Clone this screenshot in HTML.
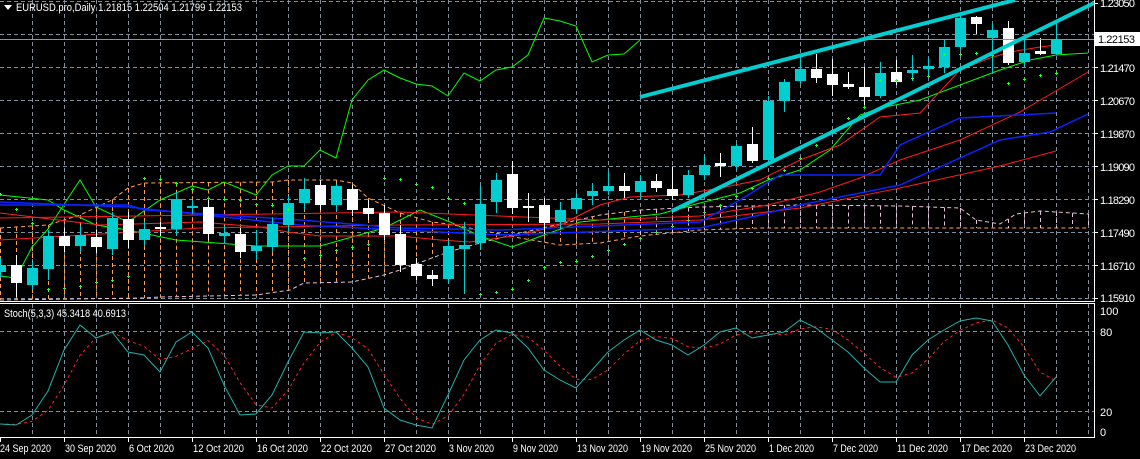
<!DOCTYPE html>
<html><head><meta charset="utf-8"><style>
html,body{margin:0;padding:0;background:#000;width:1140px;height:459px;overflow:hidden}
svg{position:absolute;left:0;top:0}
.t{font-family:"Liberation Sans",sans-serif;font-size:11px;fill:#fff}
</style></head><body>
<svg id="s" width="1140" height="459" xmlns="http://www.w3.org/2000/svg">
<g id="grid" stroke="#7f8d9c" stroke-width="1" stroke-dasharray="4,3"></g>
<g id="cloud"></g>
<g id="lines" fill="none"></g>
<g id="candles"></g>
<g id="sar" stroke="#22ff22" stroke-width="1"></g>
<line x1="640" y1="97" x2="1015" y2="0" stroke="#00ced1" stroke-width="4"/>
<line x1="672" y1="211" x2="1094" y2="3" stroke="#00ced1" stroke-width="4"/>
<line x1="0" y1="39.5" x2="1094" y2="39.5" stroke="#8a96a3" stroke-width="1"/>
<g id="stoch" fill="none"></g>
<line x1="1094.5" y1="0" x2="1094.5" y2="302" stroke="#fff"/>
<line x1="0" y1="301.5" x2="1095" y2="301.5" stroke="#fff"/>
<line x1="0" y1="303.5" x2="1095" y2="303.5" stroke="#fff"/>
<line x1="1094.5" y1="304" x2="1094.5" y2="438" stroke="#fff"/>
<line x1="0" y1="437.5" x2="1095" y2="437.5" stroke="#fff"/>
<g id="ticks" stroke="#fff"></g>
<rect x="1095" y="32" width="45" height="14" fill="#fff"/>
<text x="1098" y="43" class="t" style="fill:#000" textLength="37">1.22153</text>
<text x="1100" y="7" class="t" textLength="35">1.23050</text>
<text x="1100" y="72" class="t" textLength="35">1.21470</text>
<text x="1100" y="105" class="t" textLength="35">1.20670</text>
<text x="1100" y="138" class="t" textLength="35">1.19870</text>
<text x="1100" y="171" class="t" textLength="35">1.19090</text>
<text x="1100" y="204" class="t" textLength="35">1.18290</text>
<text x="1100" y="237" class="t" textLength="35">1.17490</text>
<text x="1100" y="270" class="t" textLength="35">1.16710</text>
<text x="1100" y="302" class="t" textLength="35">1.15910</text>
<text x="1100" y="315" class="t">100</text>
<text x="1100" y="336" class="t">80</text>
<text x="1100" y="416" class="t">20</text>
<text x="1100" y="436" class="t">0</text>
<path d="M4 5 L12 5 L8 10 Z" fill="#fff"/>
<text x="16" y="11" class="t" textLength="226" lengthAdjust="spacingAndGlyphs">EURUSD.pro,Daily  1.21815 1.22504 1.21799 1.22153</text>
<text x="4" y="317" class="t" textLength="122" lengthAdjust="spacingAndGlyphs">Stoch(5,3,3) 45.3418 40.6913</text>
<g id="dates" class="t"></g>
</svg>
<script>
var NS="http://www.w3.org/2000/svg";
function el(p,n,a,txt){var e=document.createElementNS(NS,n);for(var k in a)e.setAttribute(k,a[k]);if(txt)e.textContent=txt;document.getElementById(p).appendChild(e);return e;}
for(var x=32;x<=1088;x+=32){el('grid','line',{x1:x+.5,y1:0,x2:x+.5,y2:301});el('grid','line',{x1:x+.5,y1:304,x2:x+.5,y2:437});}
[1,34,67,100,133,166,199,232,265,298].forEach(function(y){el('grid','line',{x1:0,y1:y+.5,x2:1094,y2:y+.5});});
[331,411].forEach(function(y){el('grid','line',{x1:0,y1:y+.5,x2:1094,y2:y+.5});});
var d=["24 Sep 2020","30 Sep 2020","6 Oct 2020","12 Oct 2020","16 Oct 2020","22 Oct 2020","27 Oct 2020","3 Nov 2020","9 Nov 2020","13 Nov 2020","19 Nov 2020","25 Nov 2020","1 Dec 2020","7 Dec 2020","11 Dec 2020","17 Dec 2020","23 Dec 2020"];
d.forEach(function(s,i){var w=s.length==11?51:45;el('dates','text',{x:i*64+(i?1:0),y:452,textLength:w,lengthAdjust:'spacingAndGlyphs'},s);el('ticks','line',{x1:i*64+.5,y1:438,x2:i*64+.5,y2:442});});
[3,67,100,133,166,199,232,265,298].forEach(function(y){el('ticks','line',{x1:1094,y1:y+.5,x2:1098,y2:y+.5});});
function pl(g,pts,st,w,da){var s=pts.map(function(p){return p.join(',')}).join(' ');var a={points:s,stroke:st,'stroke-width':w||1,fill:'none'};if(da)a['stroke-dasharray']=da;el(g,'polyline',a);}
var up=[[0,228],[48,225],[80,215],[112,200],[128,188],[144,183],[272,182],[288,180],[336,180],[352,183],[368,198],[400,213],[432,222],[448,224],[480,230],[520,238],[560,245],[600,243],[640,236],[700,230],[760,228],[820,228],[900,228],[960,228],[1088,228]];
var lo=[[0,300],[144,298],[160,297],[256,295],[290,290],[304,283],[352,282],[384,275],[400,270],[448,252],[480,243],[512,235],[560,224],[600,215],[640,210],[700,207],[800,205],[900,206],[960,208],[976,220],[1000,224],[1016,214],[1040,211],[1088,214]];
pl('cloud',up,'#ff9f50',1,'4,3');pl('cloud',lo,'#e8c0d8',1,'4,3');
function interp(a,x){for(var i=1;i<a.length;i++)if(x<=a[i][0]){var t=(x-a[i-1][0])/(a[i][0]-a[i-1][0]);return a[i-1][1]+t*(a[i][1]-a[i-1][1]);}return a[a.length-1][1];}
for(var x=0;x<=1088;x+=16){var y1=interp(up,x),y2=interp(lo,x);el('cloud','line',{x1:x+.5,y1:Math.min(y1,y2),x2:x+.5,y2:Math.max(y1,y2),stroke:x<640?'#ff9f50':'#e8c0d8','stroke-dasharray':'4,3'});}
pl('lines',[[0,276],[16,278],[32,247],[48,229],[80,180],[96,207],[128,222],[160,200],[192,186],[208,190],[224,182],[256,195],[272,175],[288,166],[304,166],[320,150],[336,158],[352,100],[368,80],[384,70],[400,78],[416,84],[432,86],[448,96],[464,73],[480,81],[496,70],[512,67],[528,55],[544,18],[560,21],[576,26],[592,62],[608,55],[624,54],[640,40]],'#00ff00');
pl('lines',[[0,195],[48,200],[64,210],[96,225],[128,230],[176,240],[256,246],[320,246],[384,228],[420,210],[450,222],[480,236],[512,247],[544,235],[580,222],[620,218],[660,214],[700,203],[740,193],[768,180],[800,170],[830,150],[860,115],[880,108],[920,100],[960,85],[1000,70],[1030,60],[1056,55],[1088,53]],'#00ff00');
pl('lines',[[0,213],[100,225],[200,222],[260,227],[288,232],[320,236],[400,236],[440,240],[470,242],[520,235],[560,225],[600,205],[630,197],[680,195],[720,188],[760,180],[800,160],[840,145],[880,117],[920,113],[960,70],[990,58],[1010,52],[1040,47],[1056,45]],'#ff2020');
pl('lines',[[0,218],[200,215],[400,212],[600,220],[700,216],[768,205],[820,192],[860,178],[900,160],[960,140],[1020,112],[1088,72]],'#ff1a1a');
pl('lines',[[0,240],[200,228],[400,225],[600,224],[700,220],[800,208],[900,188],[1000,166],[1056,151]],'#ff1a1a');
pl('lines',[[0,205],[128,205],[145,210],[300,220],[400,228],[500,230],[700,222],[740,200],[780,175],[880,175],[900,145],[960,118],[1056,113]],'#0a24ff',1.5);
pl('lines',[[0,202],[128,207],[300,225],[500,235],[700,228],[760,215],[800,205],[900,185],[1000,140],[1050,132],[1088,114]],'#0a24ff',1.5);
var C=[[0,265,272,258,278,1],[16,265,283,255,297,0],[32,268,285,262,290,1],[48,236,269,230,280,1],[64,236,246,228,252,0],[80,235,246,226,252,1],[96,237,247,230,253,0],[112,218,249,212,255,1],[128,219,240,212,248,0],[144,229,240,222,246,1],[160,227,229,222,236,0],[176,199,229,192,236,1],[192,206,208,200,214,1],[208,207,234,200,240,0],[224,233,236,226,243,1],[240,234,252,228,258,0],[256,246,251,230,260,1],[272,224,247,218,252,1],[288,203,225,196,232,1],[304,189,203,178,210,1],[320,185,205,180,210,0],[336,186,205,184,212,1],[352,189,210,185,216,0],[368,208,214,200,220,0],[384,213,235,205,240,0],[400,234,265,225,272,0],[416,264,276,258,280,0],[432,275,279,270,286,0],[448,246,279,240,283,1],[464,245,249,222,294,1],[480,204,243,185,250,1],[496,180,202,173,213,1],[512,174,208,161,214,0],[528,206,208,193,222,0],[544,205,223,198,234,0],[560,210,222,202,230,1],[576,198,209,193,214,1],[592,191,196,183,205,1],[608,186,191,172,195,1],[624,186,191,173,198,0],[640,181,192,176,200,1],[656,181,188,174,192,0],[672,189,196,167,200,0],[688,175,195,170,198,1],[704,165,175,155,180,1],[720,163,166,153,177,0],[736,146,166,144,170,1],[752,144,161,127,163,0],[768,101,160,96,162,1],[784,82,101,79,112,1],[800,69,81,57,84,1],[816,69,78,54,83,0],[832,74,85,59,96,0],[848,84,87,72,89,0],[864,87,97,67,105,0],[880,73,96,62,98,1],[896,72,82,60,85,0],[912,70,73,55,81,1],[928,66,69,58,78,1],[944,47,67,40,73,1],[960,18,47,12,49,1],[976,17,24,16,34,0],[992,30,38,23,74,1],[1008,28,63,21,65,0],[1024,53,62,39,66,1],[1040,51,54,38,55,0],[1056,39,54,23,55,1]];
C.forEach(function(c){var col=c[5]?'#00ced1':'#ffffff';el('candles','line',{x1:c[0]+.5,y1:c[3],x2:c[0]+.5,y2:c[4],stroke:col});el('candles','rect',{x:c[0]-5,y:c[1],width:11,height:Math.max(2,c[2]-c[1]),fill:col});});
var S=[[0,194],[16,209],[32,223],[48,289],[64,288],[80,286],[96,282],[112,280],[128,276],[144,178],[160,179],[176,183],[192,189],[208,198],[224,199],[240,200],[256,204],[272,205],[288,209],[304,258],[320,255],[336,250],[352,247],[368,244],[384,178],[400,179],[416,184],[432,187],[448,198],[464,203],[480,294],[496,292],[512,289],[528,280],[544,267],[560,262],[576,261],[592,256],[608,250],[624,244],[640,238],[656,232],[672,226],[688,220],[704,212],[720,205],[736,196],[752,188],[768,178],[784,170],[800,158],[816,145],[832,130],[848,118],[864,107],[880,80],[896,80],[912,78],[928,76],[944,54],[960,54],[976,53],[992,55],[1008,83],[1024,79],[1040,75],[1056,73]];
S.forEach(function(p){el('sar','line',{x1:p[0]-1,y1:p[1]+.5,x2:p[0]+2,y2:p[1]+.5});el('sar','line',{x1:p[0]+.5,y1:p[1]-1,x2:p[0]+.5,y2:p[1]+2});});
var T=[[0,424],[16,425],[32,415],[48,391],[64,350],[80,325],[96,338],[112,332],[128,352],[144,355],[160,372],[176,342],[192,332],[208,348],[224,385],[240,415],[256,414],[272,395],[288,362],[304,332],[320,333],[336,332],[352,348],[368,367],[384,408],[400,420],[416,425],[432,428],[448,395],[464,360],[480,340],[496,330],[512,333],[528,348],[544,370],[560,380],[576,388],[592,370],[608,352],[624,340],[640,330],[656,340],[672,345],[688,355],[704,345],[720,332],[736,328],[752,338],[768,335],[784,332],[800,320],[816,328],[832,340],[848,352],[864,368],[880,382],[896,382],[912,355],[928,340],[944,330],[960,321],[976,318],[992,321],[1008,345],[1024,375],[1040,396],[1056,377]];
var R=T.map(function(p,i){var a=T[Math.max(0,i-1)][1],b=T[Math.max(0,i-2)][1];return [p[0],(p[1]+a+b)/3];});
R[R.length-1][1]=381;
pl('stoch',R,'#ff2020',1,'3,3');
pl('stoch',T,'#20b2aa',1);
</script>
</body></html>
